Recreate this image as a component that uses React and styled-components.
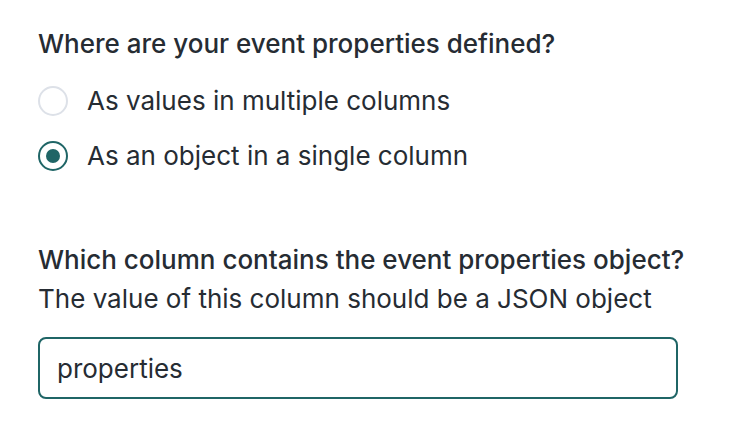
import React, { useState } from 'react';
import styled, { createGlobalStyle } from 'styled-components';

const GlobalStyle = createGlobalStyle`
  body {
    margin: 0;
    background: #ffffff;
    font-family: Inter, "Noto Sans", sans-serif;
    color: #262c33;
  }
`;

const options = [
  { id: 'columns', label: 'As values in multiple columns' },
  { id: 'object', label: 'As an object in a single column' },
];

const App = () => {
  const [selected, setSelected] = useState('object');

  return (
    <Page>
      <GlobalStyle />
      <Section>
        <Question>Where are your event properties defined?</Question>
        <OptionList>
          {options.map(option => (
            <Option key={option.id} onClick={() => setSelected(option.id)}>
              <Radio checked={selected === option.id} />
              <OptionLabel>{option.label}</OptionLabel>
            </Option>
          ))}
        </OptionList>
      </Section>

      <Section>
        <Question>Which column contains the event properties object?</Question>
        <Hint>The value of this column should be a JSON object</Hint>
        <Input defaultValue="properties" />
      </Section>
    </Page>
  );
};

const Page = styled.div`
  padding: 27px 38px;
  display: flex;
  flex-direction: column;
  gap: 70px;
  width: 640px;
`;

const Section = styled.div`
  display: flex;
  flex-direction: column;
`;

const Question = styled.div`
  font-size: 26px;
  font-weight: 500;
  line-height: 34px;
  white-space: nowrap;
`;

const Hint = styled.div`
  font-size: 26px;
  line-height: 34px;
  margin-top: 5px;
  white-space: nowrap;
`;

const OptionList = styled.div`
  display: flex;
  flex-direction: column;
  gap: 21px;
  margin-top: 23px;
`;

const Option = styled.div`
  display: flex;
  align-items: center;
  gap: 19px;
  cursor: pointer;
`;

const Radio = styled.span`
  width: 30px;
  height: 30px;
  box-sizing: border-box;
  border-radius: 50%;
  border: 2px solid ${props => (props.checked ? '#1f6566' : '#dde1e8')};
  display: flex;
  align-items: center;
  justify-content: center;
  &::after {
    content: '';
    width: 14px;
    height: 14px;
    border-radius: 50%;
    background: #1f6566;
    display: ${props => (props.checked ? 'block' : 'none')};
  }
`;

const OptionLabel = styled.span`
  font-size: 26px;
  line-height: 34px;
  white-space: nowrap;
`;

const Input = styled.input`
  margin-top: 21px;
  height: 62px;
  box-sizing: border-box;
  border: 2px solid #1f6566;
  border-radius: 8px;
  padding: 0 17px;
  font-family: Inter, "Noto Sans", sans-serif;
  font-size: 26px;
  color: #262c33;
  outline: none;
`;

export default App;
